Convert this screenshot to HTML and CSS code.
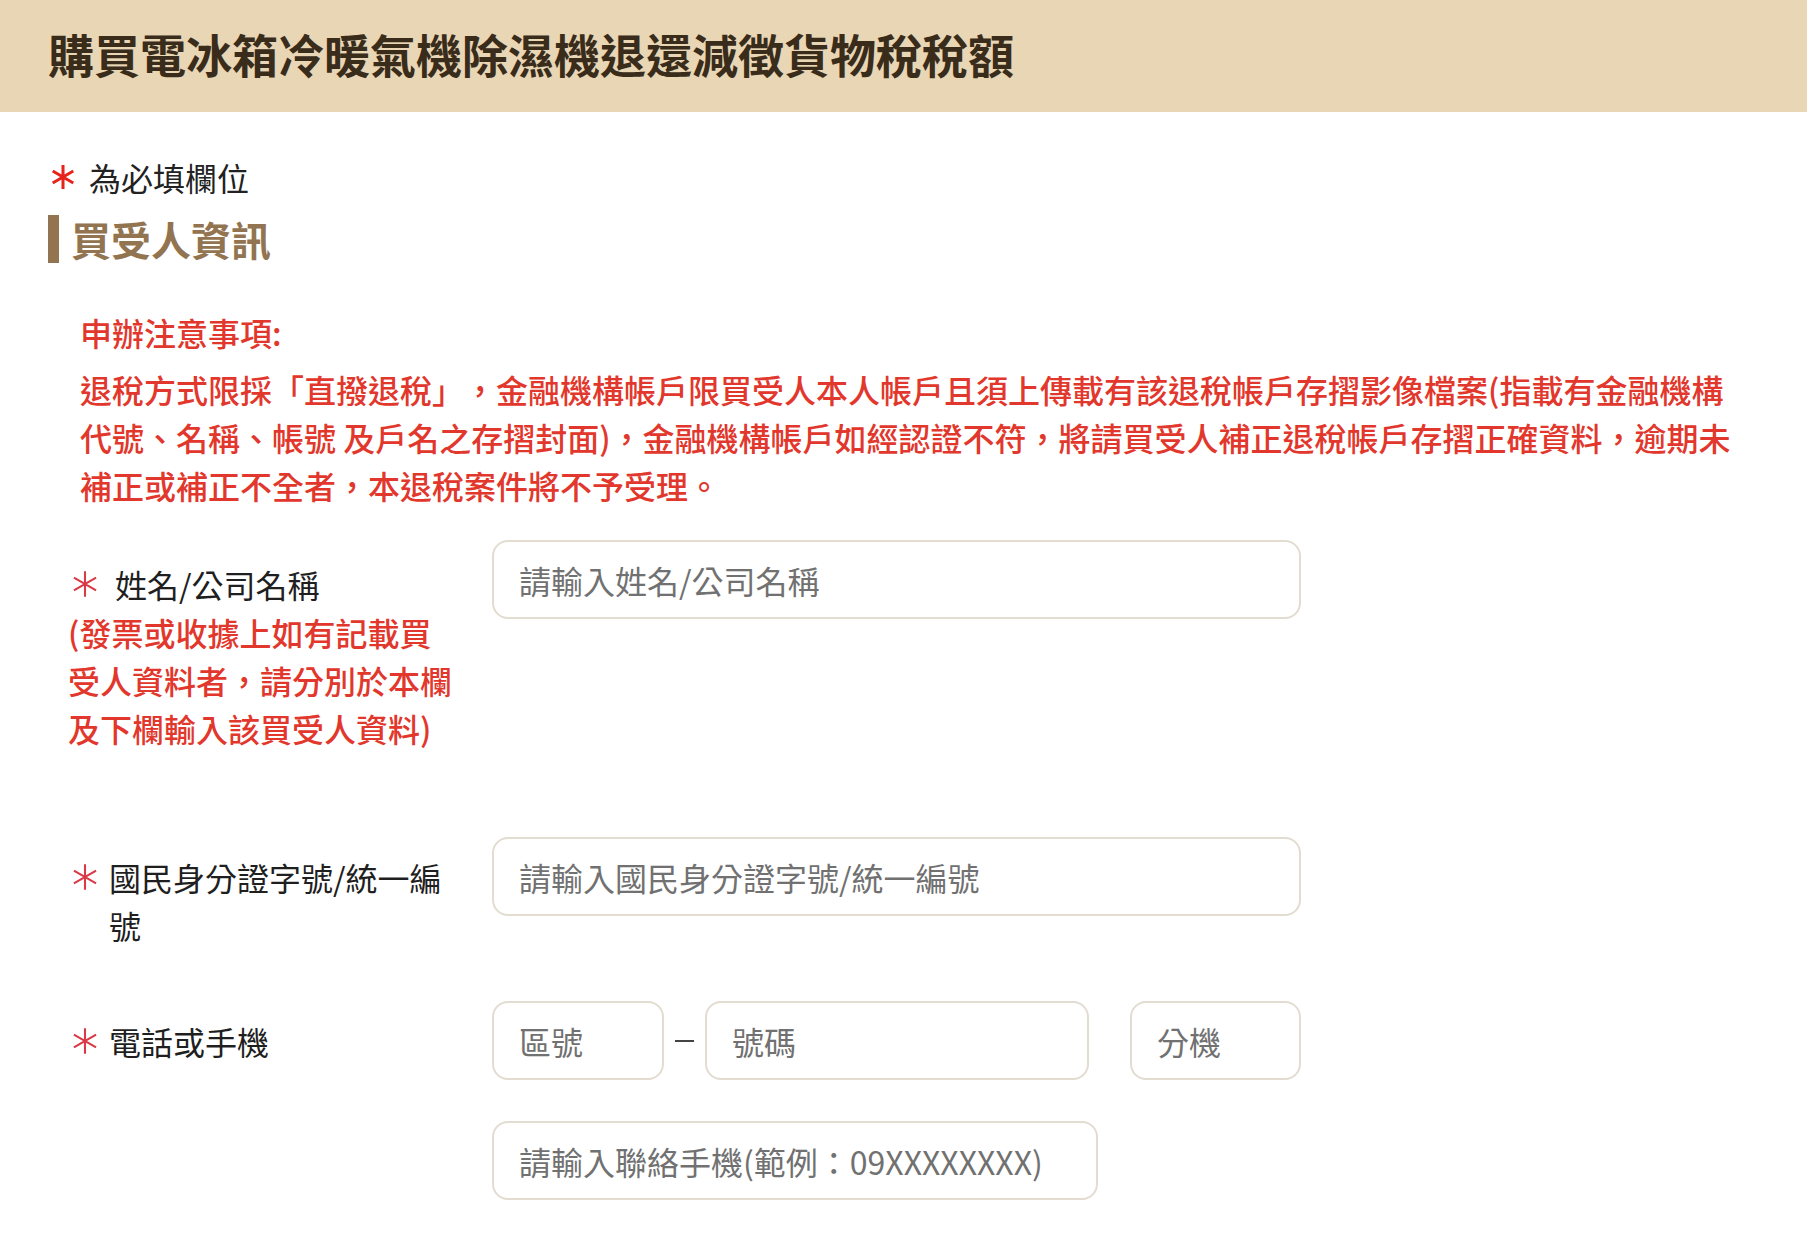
FILE: index.html
```html
<!DOCTYPE html>
<html lang="zh-Hant">
<head>
  <meta charset="UTF-8" />
  <meta name="viewport" content="width=device-width, initial-scale=1.0" />
  <title>購買電冰箱冷暖氣機除濕機退還減徵貨物稅稅額</title>
  <link rel="stylesheet" href="styles.css">
</head>
<body>

<header class="page-header">
  <h1 class="page-title">購買電冰箱冷暖氣機除濕機退還減徵貨物稅稅額</h1>
</header>

<main class="content">
  <p class="required-hint">
    <svg class="star star-bright" viewBox="0 0 24 24" aria-hidden="true"><path d="M12 1v22M2.5 6.5l19 11M21.5 6.5l-19 11"/></svg>
    為必填欄位
  </p>

  <h2 class="section-title">買受人資訊</h2>

  <div class="notice">
    <h3 class="notice-title">申辦注意事項:</h3>
    <p class="notice-text">退稅方式限採「直撥退稅」，金融機構帳戶限買受人本人帳戶且須上傳載有該退稅帳戶存摺影像檔案(指載有金融機構代號、名稱、帳號 及戶名之存摺封面)，金融機構帳戶如經認證不符，將請買受人補正退稅帳戶存摺正確資料，逾期未補正或補正不全者，本退稅案件將不予受理。</p>
  </div>

  <form class="form">
    <div class="form-row form-row-name">
      <div class="form-label">
        <div class="label-line">
          <span class="star-box"><svg class="star" viewBox="0 0 24 24" aria-hidden="true"><path d="M12 1v22M2.5 6.5l19 11M21.5 6.5l-19 11"/></svg></span>
          <span class="label-text label-text-wide">姓名/公司名稱</span>
        </div>
        <p class="label-hint">(發票或收據上如有記載買受人資料者，請分別於本欄及下欄輸入該買受人資料)</p>
      </div>
      <div class="form-field">
        <input class="input" type="text" placeholder="請輸入姓名/公司名稱" />
      </div>
    </div>

    <div class="form-row">
      <div class="form-label">
        <div class="label-line">
          <span class="star-box"><svg class="star" viewBox="0 0 24 24" aria-hidden="true"><path d="M12 1v22M2.5 6.5l19 11M21.5 6.5l-19 11"/></svg></span>
          <span class="label-text">國民身分證字號/統一編號</span>
        </div>
      </div>
      <div class="form-field">
        <input class="input" type="text" placeholder="請輸入國民身分證字號/統一編號" />
      </div>
    </div>

    <div class="form-row">
      <div class="form-label">
        <div class="label-line">
          <span class="star-box"><svg class="star" viewBox="0 0 24 24" aria-hidden="true"><path d="M12 1v22M2.5 6.5l19 11M21.5 6.5l-19 11"/></svg></span>
          <span class="label-text">電話或手機</span>
        </div>
      </div>
      <div class="form-field">
        <div class="phone-group">
          <input class="input input-area" type="text" placeholder="區號" />
          <span class="dash"></span>
          <input class="input input-number" type="text" placeholder="號碼" />
          <span class="spacer"></span>
          <input class="input input-ext" type="text" placeholder="分機" />
        </div>
        <input class="input input-mobile" type="text" placeholder="請輸入聯絡手機(範例：09XXXXXXXX)" />
      </div>
    </div>
  </form>
</main>

</body>
</html>
```

FILE: styles.css
```css
body {
  font-family: "Noto Sans CJK TC", "Noto Sans", sans-serif;
  margin: 0;
  padding: 0;
  background-color: #fff;
  color: #222;
  text-spacing-trim: space-all;
}

.page-header {
  height: 112px;
  box-sizing: border-box;
  padding: 0 48px 6px;
  display: flex;
  align-items: center;
  background-color: #e8d6b4;
}

.page-title {
  margin: 0;
  font-size: 46px;
  font-weight: 700;
  line-height: 1;
  color: #3a2c1b;
}

.content {
  padding: 41px 48px 40px;
}

.required-hint {
  display: flex;
  align-items: center;
  margin: 0;
  font-size: 32px;
  line-height: 48px;
}

.star {
  fill: none;
  stroke: #d93a45;
  stroke-width: 1.8;
}

.star-bright {
  width: 26px;
  height: 26px;
  margin: 0 13px 0 2px;
  stroke: #e8231d;
  stroke-width: 2.8;
}

.section-title {
  margin: 14px 0 0;
  padding-left: 12px;
  border-left: 11px solid #927451;
  font-size: 40px;
  font-weight: 700;
  line-height: 48px;
  color: #927451;
}

.notice {
  margin: 45px 0 31px;
  padding: 0 13px 0 32px;
  color: #e2372c;
  font-size: 32px;
  font-weight: 500;
  line-height: 48px;
}

.notice-title {
  margin: 0 0 9px;
  font-size: 32px;
  font-weight: 500;
}

.notice-text {
  margin: 0;
}

.form {
  padding-left: 20px;
}

.form-row {
  display: flex;
  align-items: flex-start;
  margin-bottom: 52px;
}

.form-row-name {
  margin-bottom: 85px;
}

.form-label {
  width: 390px;
  flex-shrink: 0;
  margin-right: 34px;
  padding-top: 16px;
  font-size: 32px;
  line-height: 48px;
}

.form-row-name .form-label {
  padding-top: 20px;
}

.label-line {
  display: flex;
  align-items: flex-start;
}

.star-box {
  width: 30px;
  height: 48px;
  flex-shrink: 0;
  display: flex;
  align-items: center;
  justify-content: center;
  margin-left: 2px;
  margin-right: 9px;
}

.star-box .star {
  width: 28px;
  height: 28px;
}

.label-text {
  flex: 1;
  color: #1f1f1f;
}

.label-text-wide {
  margin-left: 6px;
}

.label-hint {
  margin: 0;
  color: #e2372c;
  font-weight: 500;
}

.form-field {
  width: 809px;
}

.input {
  display: block;
  width: 100%;
  height: 79px;
  box-sizing: border-box;
  padding: 0 25px;
  border: 2px solid #e2dcd1;
  border-radius: 16px;
  background-color: #fff;
  font-family: "Noto Sans CJK TC", "Noto Sans", sans-serif;
  font-size: 32px;
  color: #333;
  outline: none;
}

.input::placeholder {
  color: #717171;
}

.phone-group {
  display: flex;
  align-items: center;
}

.input-area {
  width: 172px;
}

.input-number {
  flex: 1;
}

.input-ext {
  width: 171px;
}

.dash,
.spacer {
  width: 41px;
  flex-shrink: 0;
  display: flex;
  justify-content: center;
}

.dash::before {
  content: "";
  width: 19px;
  height: 2px;
  background-color: #444;
}

.input-mobile {
  width: 606px;
  margin-top: 41px;
}
```
